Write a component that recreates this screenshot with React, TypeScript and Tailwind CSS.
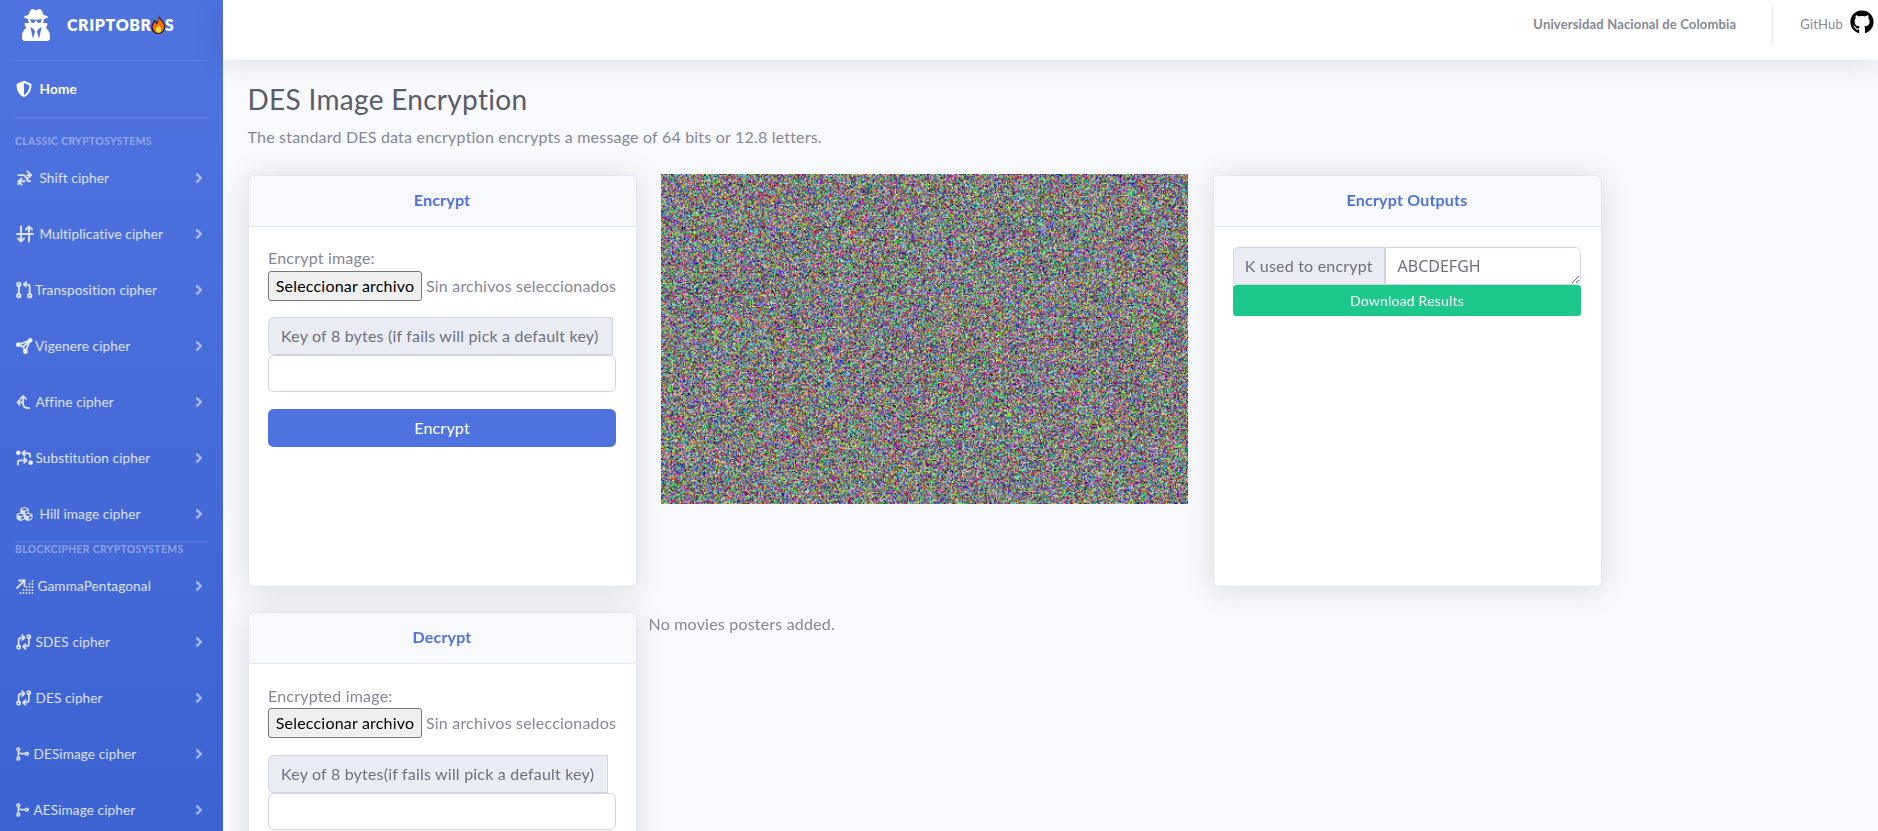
import { useEffect, useRef, type ReactNode } from "react";
import { FaUserSecret, FaShieldAlt, FaAngleRight, FaCubes, FaGithub } from "react-icons/fa";

function Stroke({ children, className }: { children: ReactNode; className: string }) {
  return (
    <svg viewBox="0 0 18 18" fill="none" stroke="currentColor" strokeWidth="2" strokeLinecap="round" strokeLinejoin="round" className={className}>
      {children}
    </svg>
  );
}

const dot = (cx: number, cy: number, r = 1.8) => <circle cx={cx} cy={cy} r={r} />;

const ShiftIcon = () => (
  <Stroke className="w-[17px] h-[18px]">
    <path d="M2.500 6H8c3 0 3 6.500 6 6.500h1M2.500 15.500c0-2 1-3 3-3H9M15.500 6H12M12 2l4 4-4 3.500M6 9.500l-3.500 3 3.500 3.500" />
  </Stroke>
);
const MultIcon = () => (
  <Stroke className="w-[18px] h-[18px]">
    <path d="M5 7V1.500M5 11v5.500M2 13.500l3 3 3-3M13 16.500V11M13 7V1.500M10 4.500l3-3 3 3M1 9h16" />
  </Stroke>
);
const TransIcon = () => (
  <Stroke className="w-[17px] h-[18px]">
    {dot(3, 3)}
    {dot(3, 15)}
    {dot(14.500, 15)}
    <path d="M3 5v8M14.500 13V6c0-2-1-3-3-3H8.500M10.500 .8 8.300 3l2.200 2.200" />
  </Stroke>
);
const VigIcon = () => (
  <Stroke className="w-[17px] h-[18px]">
    <path d="M15 3 2.500 7.500l5 2.500 2.500 5zM15 3 7.500 10" />
    <circle cx="15" cy="3" r="1.600" fill="currentColor" />
    <circle cx="10" cy="15" r="1.600" fill="currentColor" />
    <circle cx="2.500" cy="7.500" r="1.600" fill="currentColor" />
  </Stroke>
);
const AffineIcon = () => (
  <Stroke className="w-[16px] h-[18px]">
    <path d="M8 3v8c0 3 2 5 7 5M4.800 5.500 8 2.300l3.200 3.200M8 9.500H1.800M4.300 6.800 1.600 9.500l2.700 2.700" />
  </Stroke>
);
const SubstIcon = () => (
  <Stroke className="w-[17px] h-[18px]">
    <circle cx="2.500" cy="3.500" r="1.500" fill="currentColor" />
    <circle cx="15.500" cy="14" r="1.500" fill="currentColor" />
    <path d="M15 8V6.500C15 5 14 4 12.500 4H7M9.300 1.500 6.800 4l2.500 2.500M2 16v-2c0-1.500 1-2.500 2.500-2.500H11M8.700 9 11.200 11.500 8.700 14" />
  </Stroke>
);
const GammaIcon = () => (
  <svg viewBox="0 0 18 15" className="w-[18px] h-[15px]" fill="currentColor">
    <path d="M1 9 8 2" stroke="currentColor" strokeWidth="1.800" strokeLinecap="round" />
    <path d="M3 1.500h5.500V7" stroke="currentColor" strokeWidth="1.800" fill="none" strokeLinecap="round" />
    {[
      [16.500, 2],
      [13.500, 5],
      [16.500, 5],
      [10.500, 8],
      [13.500, 8],
      [16.500, 8],
      [7.500, 11],
      [10.500, 11],
      [13.500, 11],
      [16.500, 11],
      [4.500, 14],
      [7.500, 14],
      [10.500, 14],
      [13.500, 14],
      [16.500, 14],
    ].map(([x, y]) => (
      <circle key={`${x}-${y}`} cx={x} cy={y} r="0.950" />
    ))}
  </svg>
);
const CompareIcon = () => (
  <Stroke className="w-[16px] h-[18px]">
    {dot(14.500, 3)}
    {dot(3, 15)}
    <path d="M3 13V7c0-2 1-3 3-3h3M7 1.300 9.700 4 7 6.700M14.500 5v6c0 2-1 3-3 3H8.500M10.700 11.300 8 14l2.700 2.700" />
  </Stroke>
);
const BranchIcon = () => (
  <Stroke className="w-[14px] h-[18px]">
    {dot(3, 3)}
    {dot(3, 15)}
    {dot(14, 8.500)}
    <path d="M3 5v8M3 5c0 2 2 3.500 4 3.500h5" />
  </Stroke>
);

const classic = [
  { label: "Shift cipher", icon: <ShiftIcon />, box: "w-[23.500px]" },
  { label: "Multiplicative cipher", icon: <MultIcon />, box: "w-[23.500px]" },
  { label: "Transposition cipher", icon: <TransIcon />, box: "w-[19px]" },
  { label: "Vigenere cipher", icon: <VigIcon />, box: "w-[19px]" },
  { label: "Affine cipher", icon: <AffineIcon />, box: "w-[19.500px]" },
  { label: "Substitution cipher", icon: <SubstIcon />, box: "w-[19.500px]" },
  { label: "Hill image cipher", icon: <FaCubes className="w-[17px] h-[16px]" />, box: "w-[23.500px]" },
];

const block = [
  { label: "GammaPentagonal", icon: <GammaIcon />, box: "w-[21.500px]" },
  { label: "SDES cipher", icon: <CompareIcon />, box: "w-[19.500px]" },
  { label: "DES cipher", icon: <CompareIcon />, box: "w-[19.500px]" },
  { label: "DESimage cipher", icon: <BranchIcon />, box: "w-[17.500px]" },
  { label: "AESimage cipher", icon: <BranchIcon />, box: "w-[17.500px]" },
];

function NavItem({ label, icon, box }: { label: string; icon: ReactNode; box: string }) {
  return (
    <a className="h-[56px] shrink-0 flex items-center pl-4 pr-[19px] text-[13.600px] text-white/80 tracking-[0.1px]">
      <span className={`${box} shrink-0 flex items-center`}>{icon}</span>
      <span className="flex-1 whitespace-nowrap">{label}</span>
      <FaAngleRight className="text-white/50 w-[10px] h-[16px]" />
    </a>
  );
}

function Flame() {
  return (
    <svg viewBox="0 0 16 20" className="w-[15px] h-[19px] inline-block align-[-3px] mx-[-1px]">
      <path d="M8 0c1 3 6 6 7 11 .6 5-3 9-7 9s-8-3-7.500-8C1 9 3 8 3.500 5 5 6 5.500 7 6 8 7.500 6 8.500 3 8 0z" fill="#1f1206" />
      <path d="M8 2c1 3 5.500 5 6 9.500.3 4-3 7.500-6 7.500s-6.500-3-6.300-7C2 10 3.500 9 4 7c1 1 1.500 2 2.200 3C7.500 8 8.500 5 8 2z" fill="#f4700f" />
      <path d="M8 10c.5 2 3 3 3 5.500 0 2-1.500 3-3 3s-3-1-3-3c0-1 .8-2 1.500-2.500C7.300 12.500 8 11.500 8 10z" fill="#fddc3a" />
    </svg>
  );
}

function Sidebar() {
  return (
    <aside className="w-[223px] shrink-0 h-full overflow-hidden flex flex-col bg-[linear-gradient(180deg,#4e73df_10%,#3d62d2_100%)]">
      <div className="h-[60px] shrink-0 flex items-start pl-[22px] pt-[9px] text-white">
        <FaUserSecret className="w-[28px] h-[32px]" />
        <span className="ml-[17px] mt-[4px] text-[16px] font-extrabold tracking-[0.6px] whitespace-nowrap">
          CRIPTOBR
          <Flame />S
        </span>
      </div>
      <div className="mx-[15px] h-px shrink-0 bg-white/15" />
      <a className="h-[56px] shrink-0 flex items-center pl-4 text-[13.600px] font-bold text-white">
        <FaShieldAlt className="w-[16px] h-[16px] mr-[7.500px]" />
        Home
      </a>
      <div className="mx-[15px] h-px shrink-0 bg-white/15" />
      <div className="pl-[15px] pt-[18px] h-[32px] shrink-0 text-[10.400px] leading-none font-bold uppercase text-white/40 whitespace-nowrap tracking-[0.35px]">
        Classic Cryptosystems
      </div>
      {classic.map((it) => (
        <NavItem key={it.label} {...it} />
      ))}
      <div className="mx-[15px] h-px shrink-0 bg-white/15 -mt-[1px]" />
      <div className="pl-[15px] pt-[2px] h-[16px] shrink-0 text-[10.400px] leading-none font-bold uppercase text-white/40 whitespace-nowrap tracking-[0.35px]">
        Blockcipher Cryptosystems
      </div>
      {block.map((it) => (
        <NavItem key={it.label} {...it} />
      ))}
    </aside>
  );
}

function Topbar() {
  return (
    <header className="h-[60px] shrink-0 bg-white shadow-[0_2px_28px_0_rgba(58,59,69,0.15)] flex items-center justify-end pr-[4px] pb-[11px] relative">
      <span className="text-[13px] font-bold tracking-[0.15px] text-[#858796] whitespace-nowrap">Universidad Nacional de Colombia</span>
      <div className="w-px h-[38px] bg-[#e3e6f0] ml-[36px] mr-[27px]" />
      <span className="text-[13px] text-[#858796]">GitHub</span>
      <FaGithub className="w-[24px] h-[24px] text-black ml-[7px] -mt-[5px]" />
    </header>
  );
}

function Card({ title, className, children }: { title: string; className: string; children: ReactNode }) {
  return (
    <section className={`w-[389px] shrink-0 rounded-[5.600px] border border-[#e3e6f0] bg-white shadow-[0_2.400px_28px_0_rgba(58,59,69,0.15)] ${className}`}>
      <h6 className="h-[51px] pb-[2px] rounded-t-[5.600px] border-b border-[#e3e6f0] bg-[#f8f9fc] flex items-center justify-center text-[16px] font-bold text-[#4e73df]">
        {title}
      </h6>
      <div className="px-[19.500px] pt-[18.500px] pb-[19px]">{children}</div>
    </section>
  );
}

function FileForm({ label, keyText, keyWidth }: { label: string; keyText: string; keyWidth: string }) {
  return (
    <>
      <div className="pt-[1px] h-[25px] text-[16px] leading-[24px] text-[#858796]">{label}</div>
      <div className="flex items-center h-[31px] whitespace-nowrap">
        <button className="h-[30px] w-[154px] shrink-0 rounded-[3px] border border-[#767676] bg-[#efefef] text-[16px] text-black">
          Seleccionar archivo
        </button>
        <span className="ml-[4px] text-[16px] text-[#858796]">Sin archivos seleccionados</span>
      </div>
      <div className={`mt-[16px] h-[38px] ${keyWidth} flex items-center px-[12px] rounded-l-[5.600px] border border-[#d1d3e2] bg-[#eaecf4] text-[16px] text-[#6e707e] whitespace-nowrap`}>
        {keyText}
      </div>
      <input className="block w-[348px] h-[37px] rounded-[5.600px] border border-[#d1d3e2] bg-white" />
    </>
  );
}

// random bytes, same look as the encrypted picture
function NoiseImage() {
  const ref = useRef<HTMLCanvasElement>(null);
  useEffect(() => {
    const canvas = ref.current;
    const ctx = canvas?.getContext("2d");
    if (!canvas || !ctx) return;
    const img = ctx.createImageData(canvas.width, canvas.height);
    let seed = 12345;
    const next = () => {
      seed = (seed * 1664525 + 1013904223) >>> 0;
      return seed >>> 24;
    };
    for (let i = 0; i < img.data.length; i += 4) {
      img.data[i] = next();
      img.data[i + 1] = next();
      img.data[i + 2] = next();
      img.data[i + 3] = 255;
    }
    ctx.putImageData(img, 0, 0);
  }, []);
  return <canvas ref={ref} width={480} height={300} className="w-[527px] h-[330px] shrink-0 ml-[24.500px] -mt-[0.500px]" />;
}

export default function App() {
  return (
    <div className="flex h-screen overflow-hidden bg-[#f8f9fc] tracking-[0.2px] font-['Lato','Noto_Sans',sans-serif]">
      <Sidebar />
      <div className="flex-1 min-w-0 flex flex-col">
        <Topbar />
        <main className="flex-1 min-h-0 overflow-hidden px-[24.500px]">
          <h1 className="mt-[23px] text-[28px] leading-[33.600px] tracking-[0.3px] text-[#5a5c69]">DES Image Encryption</h1>
          <p className="mt-[8px] text-[16px] leading-[24px] text-[#858796]">
            The standard DES data encryption encrypts a message of 64 bits or 12.8 letters.
          </p>
          <div className="mt-[26px] flex items-start">
            <Card title="Encrypt" className="h-[412px]">
              <FileForm label="Encrypt image:" keyText="Key of 8 bytes (if fails will pick a default key)" keyWidth="w-[345px]" />
              <button className="mt-[17px] w-[348px] h-[38px] rounded-[5.600px] bg-[#4e73df] text-[16px] text-white">Encrypt</button>
            </Card>
            <NoiseImage />
            <Card title="Encrypt Outputs" className="h-[412px] ml-[24.500px]">
              <div className="flex h-[38px] mt-[2px]">
                <span className="w-[152px] flex items-center justify-center rounded-l-[5.600px] border border-[#d1d3e2] bg-[#eaecf4] text-[16px] text-[#6e707e] whitespace-nowrap">
                  K used to encrypt
                </span>
                <textarea
                  readOnly
                  defaultValue="ABCDEFGH"
                  className="w-[197px] h-[38px] rounded-r-[5.600px] border border-[#d1d3e2] bg-white px-[12px] py-[6px] text-[16px] leading-[24px] tracking-normal font-['Noto_Sans',sans-serif] text-[#6e707e] outline-none"
                />
              </div>
              <button className="block w-[348px] h-[31px] rounded-[3.200px] bg-[#1cc88a] text-[14px] text-white">Download Results</button>
            </Card>
          </div>
          <div className="mt-[25.500px] flex items-start">
            <Card title="Decrypt" className="h-[412px]">
              <FileForm label="Encrypted image:" keyText="Key of 8 bytes(if fails will pick a default key)" keyWidth="w-[340px]" />
            </Card>
            <p className="ml-[12px] -mt-[0.500px] text-[16px] leading-[24px] text-[#858796] whitespace-nowrap">No movies posters added.</p>
          </div>
        </main>
      </div>
    </div>
  );
}
